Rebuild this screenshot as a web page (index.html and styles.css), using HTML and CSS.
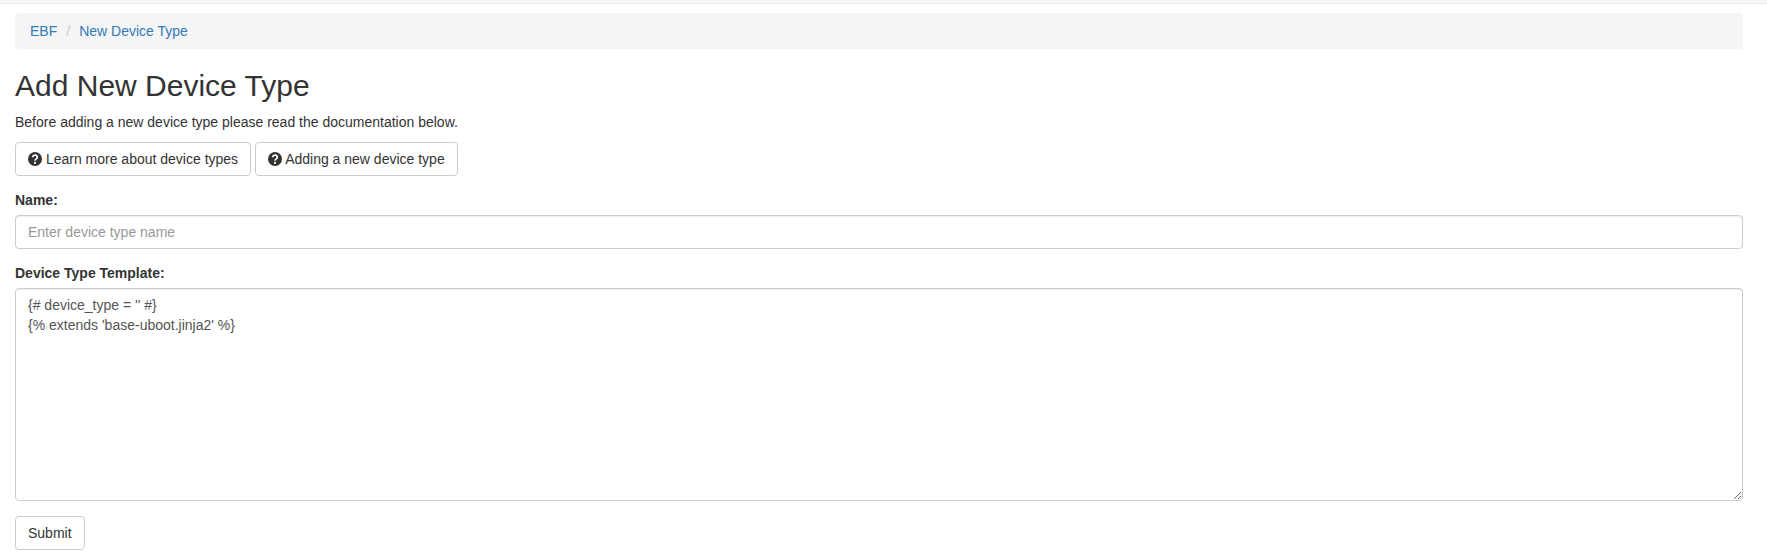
FILE: index.html
```html
<!DOCTYPE html>
<html lang="en">
<head>
    <meta charset="UTF-8">
    <title>Add New Device Type</title>
    <link rel="stylesheet" href="styles.css">
</head>
<body>
    <div class="navbar"></div>
    <div class="container">
        <ol class="breadcrumb">
            <li><a href="#">EBF</a></li>
            <li class="separator">/</li>
            <li><a href="#">New Device Type</a></li>
        </ol>
        <h2>Add New Device Type</h2>
        <p>Before adding a new device type please read the documentation below.</p>
        <div class="help-buttons">
            <a class="btn" href="#"><svg class="icon" viewBox="0 0 14 14"><circle cx="7" cy="7" r="7"/><path class="icon-mark" d="M4.7 5.2a2.3 2.1 0 1 1 3.6 1.7C7.4 7.5 7 7.9 7 8.8"/><rect class="icon-dot" x="6" y="9.9" width="2" height="1.9"/></svg> Learn more about device types</a>
            <a class="btn" href="#"><svg class="icon" viewBox="0 0 14 14"><circle cx="7" cy="7" r="7"/><path class="icon-mark" d="M4.7 5.2a2.3 2.1 0 1 1 3.6 1.7C7.4 7.5 7 7.9 7 8.8"/><rect class="icon-dot" x="6" y="9.9" width="2" height="1.9"/></svg> Adding a new device type</a>
        </div>
        <form>
            <div class="form-group name-group">
                <label for="name">Name:</label>
                <input class="form-control" id="name" type="text" placeholder="Enter device type name">
            </div>
            <div class="form-group">
                <label for="template">Device Type Template:</label>
                <textarea class="form-control template" id="template" spellcheck="false">{# device_type = '' #}
{% extends 'base-uboot.jinja2' %}</textarea>
            </div>
            <button class="btn" type="button">Submit</button>
        </form>
    </div>
</body>
</html>
```

FILE: styles.css
```css
* {
    box-sizing: border-box;
}

body {
    margin: 0;
    font-family: "Liberation Sans", Arial, sans-serif;
    font-size: 14px;
    line-height: 20px;
    color: #333;
    background-color: #fff;
}

a {
    color: #337ab7;
    text-decoration: none;
}

.navbar {
    height: 4px;
    background-color: #f8f8f8;
    border-bottom: 1px solid #e7e7e7;
}

.container {
    padding: 9px 24px 0 15px;
}

.breadcrumb {
    display: flex;
    margin: 0 0 20px;
    padding: 8px 15px;
    list-style: none;
    background-color: #f5f5f5;
    border-radius: 4px;
}

.breadcrumb .separator {
    padding: 0 9px;
    color: #ccc;
}

h2 {
    margin: 0 0 10px;
    font-size: 30px;
    font-weight: 500;
    line-height: 33px;
}

p {
    margin: 0 0 10px;
}

.help-buttons {
    margin-bottom: 14px;
}

.btn {
    display: inline-block;
    height: 34px;
    padding: 6px 12px;
    font-family: inherit;
    font-size: 14px;
    line-height: 20px;
    color: #333;
    background-color: #fff;
    border: 1px solid #ccc;
    border-radius: 4px;
    vertical-align: middle;
}

.icon {
    display: inline-block;
    width: 14px;
    height: 14px;
    fill: #333;
    vertical-align: -2px;
}

.icon-mark {
    fill: none;
    stroke: #fff;
    stroke-width: 1.7;
}

.icon-dot {
    fill: #fff;
}

.form-group {
    margin-bottom: 15px;
}

.name-group {
    margin-bottom: 14px;
}

label {
    display: inline-block;
    margin-bottom: 5px;
    font-weight: 700;
}

.form-control {
    display: block;
    width: 100%;
    height: 34px;
    padding: 6px 12px;
    font-family: inherit;
    font-size: 14px;
    line-height: 20px;
    color: #555;
    background-color: #fff;
    border: 1px solid #ccc;
    border-radius: 4px;
    box-shadow: inset 0 1px 1px rgba(0, 0, 0, 0.075);
}

.form-control::placeholder {
    color: #999;
}

.template {
    height: 213px;
}
```
